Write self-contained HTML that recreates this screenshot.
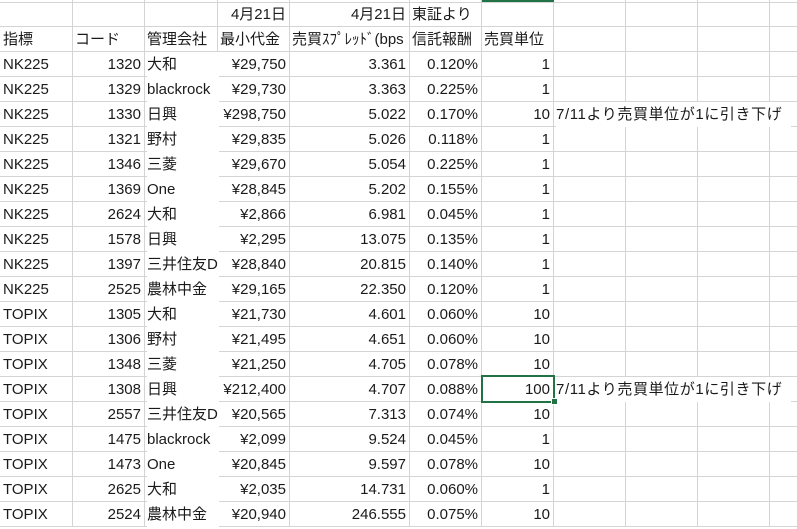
<!DOCTYPE html><html><head><meta charset="utf-8"><style>
body{margin:0;width:797px;height:529px;background:#fff;overflow:hidden;position:relative;font-family:"Liberation Sans","Noto Sans CJK JP",sans-serif;font-size:15px;color:#1a1a1a}
.v{position:absolute;top:0;width:1px;height:529px;background:#d4d4d4}
.h{position:absolute;left:0;height:1px;width:797px;background:#d4d4d4}
.c{position:absolute;height:25px;line-height:26px;white-space:nowrap;overflow:visible}
.r{text-align:right}
</style></head><body>
<div class="v" style="left:72px"></div><div class="v" style="left:144px"></div><div class="v" style="left:217px"></div><div class="v" style="left:289px"></div><div class="v" style="left:409px"></div><div class="v" style="left:481px"></div><div class="v" style="left:553px"></div><div class="v" style="left:625px"></div><div class="v" style="left:697px"></div><div class="v" style="left:769px"></div>
<div id="rows"></div>
<div style="position:absolute;left:482px;top:0;width:72px;height:2px;background:#217346"></div>
<script>
var H=[2,26,51];for(var k=1;k<=19;k++)H.push(51+25*k);
var s='';H.forEach(function(y){s+='<div class="h" style="top:'+y+'px"></div>'});
var X=[0,72,144,217,289,409,481,553];
function cell(col,row,t,right,top){var x=X[col],w=X[col+1]-x;var y=top;
s+='<div class="c'+(right?' r':'')+'" style="left:'+(x+(right?0:3))+'px;top:'+y+'px;width:'+(w-3)+'px">'+t+'</div>';}
cell(3,0,'4月21日',1,2);cell(4,0,'4月21日',1,2);cell(5,0,'東証より',0,2);
['指標','コード','管理会社','最小代金','売買ｽﾌﾟﾚｯﾄﾞ(bps','信託報酬','売買単位'].forEach(function(t,i){cell(i,1,t,0,27)});
var D=[['NK225',1320,'大和','¥29,750','3.361','0.120%',1],['NK225',1329,'blackrock','¥29,730','3.363','0.225%',1],['NK225',1330,'日興','¥298,750','5.022','0.170%',10],['NK225',1321,'野村','¥29,835','5.026','0.118%',1],['NK225',1346,'三菱','¥29,670','5.054','0.225%',1],['NK225',1369,'One','¥28,845','5.202','0.155%',1],['NK225',2624,'大和','¥2,866','6.981','0.045%',1],['NK225',1578,'日興','¥2,295','13.075','0.135%',1],['NK225',1397,'三井住友D','¥28,840','20.815','0.140%',1],['NK225',2525,'農林中金','¥29,165','22.350','0.120%',1],['TOPIX',1305,'大和','¥21,730','4.601','0.060%',10],['TOPIX',1306,'野村','¥21,495','4.651','0.060%',10],['TOPIX',1348,'三菱','¥21,250','4.705','0.078%',10],['TOPIX',1308,'日興','¥212,400','4.707','0.088%',100],['TOPIX',2557,'三井住友D','¥20,565','7.313','0.074%',10],['TOPIX',1475,'blackrock','¥2,099','9.524','0.045%',1],['TOPIX',1473,'One','¥20,845','9.597','0.078%',10],['TOPIX',2625,'大和','¥2,035','14.731','0.060%',1],['TOPIX',2524,'農林中金','¥20,940','246.555','0.075%',10]];
D.forEach(function(r,k){var y=52+25*k;cell(0,0,r[0],0,y);cell(1,0,r[1],1,y);
s+='<div class="c" style="left:147px;top:'+y+'px;width:72px;background:#fff;overflow:hidden">'+r[2]+'</div>';
cell(3,0,r[3],1,y);cell(4,0,r[4],1,y);cell(5,0,r[5],1,y);cell(6,0,r[6],1,y);
if(k==2||k==13)s+='<div class="c" style="left:556px;top:'+y+'px;background:#fff;width:235px;letter-spacing:0.6px">7/11より売買単位が1に引き下げ</div>';});
s+='<div style="position:absolute;left:481px;top:375px;width:70px;height:24px;border:2px solid #217346"></div><div style="position:absolute;left:551px;top:398px;width:5px;height:5px;background:#217346;border:1px solid #fff"></div>';
s+='<div style="position:absolute;left:0;top:527px;width:797px;height:2px;background:#fff"></div>';
document.getElementById('rows').innerHTML=s;
</script>
</body></html>
